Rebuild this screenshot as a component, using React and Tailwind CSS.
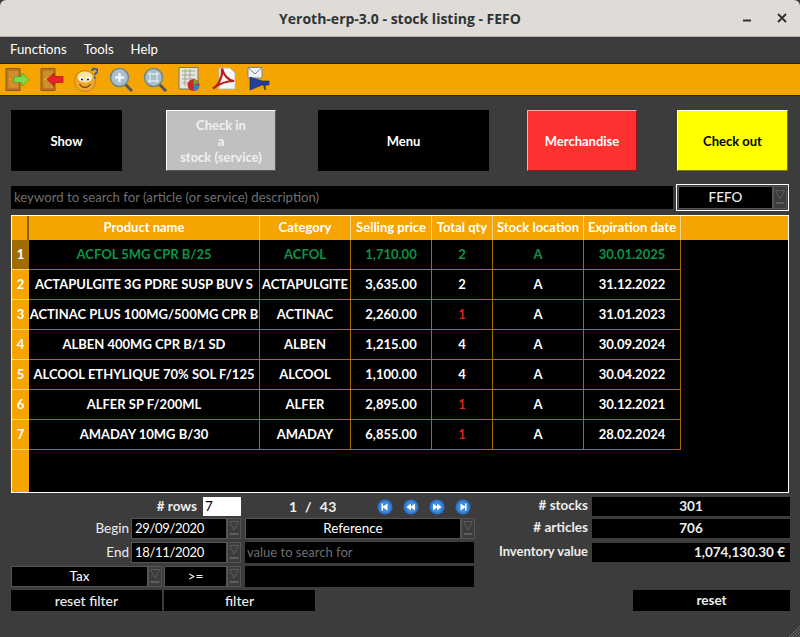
const headers = [
    ['Product name', 'w-[231px]'],
    ['Category', 'w-[91px]'],
    ['Selling price', 'w-[81px]'],
    ['Total qty', 'w-[61px]'],
    ['Stock location', 'w-[91px]'],
    ['Expiration date', 'w-[97px]'],
]

const rows = [
    ['ACFOL 5MG CPR B/25', 'ACFOL', '1,710.00', '2', 'A', '30.01.2025'],
    ['ACTAPULGITE 3G PDRE SUSP BUV S', 'ACTAPULGITE', '3,635.00', '2', 'A', '31.12.2022'],
    ['ACTINAC PLUS 100MG/500MG CPR B', 'ACTINAC', '2,260.00', '1', 'A', '31.01.2023'],
    ['ALBEN 400MG CPR B/1 SD', 'ALBEN', '1,215.00', '4', 'A', '30.09.2024'],
    ['ALCOOL ETHYLIQUE 70% SOL F/125', 'ALCOOL', '1,100.00', '4', 'A', '30.04.2022'],
    ['ALFER SP F/200ML', 'ALFER', '2,895.00', '1', 'A', '30.12.2021'],
    ['AMADAY 10MG B/30', 'AMADAY', '6,855.00', '1', 'A', '28.02.2024'],
]

function Arrow({ className = '' }) {
    return (
        <div className={`flex w-[14px] shrink-0 flex-col items-center justify-center border border-[#555] bg-[#3c3c3c] ${className}`}>
            <svg width="10" height="15" viewBox="0 0 10 15">
                <path d="M0.5 0.5H9.5L5 9Z" fill="none" stroke="#5c5c5c" />
                <path d="M0.5 13H9.5" stroke="#6a6a6a" strokeWidth="1.5" />
            </svg>
        </div>
    )
}

function Combo({ text, className = '', left }) {
    return (
        <div className={`flex h-[21px] ${className}`}>
            <div className={`flex min-w-0 flex-1 items-center border border-[#555] bg-black text-white ${left ? 'pl-[3px] text-[13px] tracking-[-0.3px]' : 'justify-center text-[13.5px]'}`}>{text}</div>
            <Arrow />
        </div>
    )
}

function NavIcon({ d }) {
    return (
        <svg width="16" height="16" viewBox="0 0 16 16">
            <circle cx="8" cy="8" r="7.5" fill="#2a76cf" />
            <circle cx="8" cy="8" r="5.5" fill="#3f8de0" />
            <path d={d} fill="#fff" />
        </svg>
    )
}

function Door({ color, edge, flip }) {
    return (
        <svg width="24" height="24" viewBox="0 0 24 24">
            <path d="M1 0.500H15V22.500H1Z" fill="#b9791c" stroke="#8a5a14" />
            <path d="M3.500 3H13V20H3.500Z" fill="#d08e2c" />
            <circle cx="5" cy="11" r="0.8" fill="#f0c070" />
            {flip
                ? <path d="M23 8.500H14V5L7 11.500L14 18V14.500H23Z" fill={color} stroke={edge} strokeWidth="0.7" />
                : <path d="M9 8.500H17V5L24 11.500L17 18V14.500H9Z" fill={color} stroke={edge} strokeWidth="0.7" />}
        </svg>
    )
}

function Toolbar() {
    return (
        <div className="flex h-[33px] items-center gap-[10.5px] border-y border-[#222] bg-[#f5a400] pl-[5px]">
            <Door color="#7fd94d" edge="#4d9c24" />
            <Door color="#ee2222" edge="#a01414" flip />
            <svg width="24" height="25" viewBox="0 0 24 25">
                <circle cx="11" cy="14" r="10.500" fill="#eda82d" stroke="#a96f12" strokeWidth="0.6" />
                <ellipse cx="11" cy="10" rx="7.500" ry="5.500" fill="#fbe3a5" />
                <circle cx="7.500" cy="12" r="2.200" fill="#fff" />
                <circle cx="14.500" cy="12" r="2.200" fill="#fff" />
                <circle cx="8" cy="12.500" r="1.100" fill="#222" />
                <circle cx="14" cy="12.500" r="1.100" fill="#222" />
                <path d="M5.500 17C8 21.500 14 21.500 16.500 17" fill="none" stroke="#8a3a10" strokeWidth="1.2" />
                <path d="M18 4C18 0.800 23.500 0.800 23.500 4C23.500 6 20.800 6 20.800 8M20.800 9.500V11.500" fill="none" stroke="#2f55a8" strokeWidth="1.6" />
            </svg>
            <svg width="24" height="25" viewBox="0 0 24 25">
                <path d="M15 16L23 24" stroke="#555" strokeWidth="3" />
                <circle cx="10.500" cy="10.500" r="9" fill="#a9c0cc" stroke="#74858e" strokeWidth="1.5" />
                <path d="M10.500 6V15M6 10.500H15" stroke="#f2f6f8" strokeWidth="2.4" />
            </svg>
            <svg width="24" height="25" viewBox="0 0 24 25">
                <path d="M15 16L23 24" stroke="#555" strokeWidth="3" />
                <circle cx="10.500" cy="10.500" r="9" fill="#a9c0cc" stroke="#74858e" strokeWidth="1.5" />
                <path d="M5 7H16M5 14H16M7 5V16M14 5V16" stroke="#dbe6ea" strokeWidth="1.3" />
            </svg>
            <svg width="24" height="25" viewBox="0 0 24 25">
                <path d="M1 0.500H20V22H1Z" fill="#e4e4de" stroke="#777" />
                <path d="M4 4H17M4 8H17M4 12H17M4 16H10M7 2V19M12 2V12" stroke="#a5a59e" />
                <circle cx="15.500" cy="18" r="6" fill="#c9272c" />
                <path d="M15.500 18H21.500A6 6 0 0 1 15.500 24Z" fill="#3a7fbe" />
                <path d="M15.500 18V12.500A6 6 0 0 1 21 16Z" fill="#6aa63a" />
            </svg>
            <svg width="24" height="25" viewBox="0 0 24 25">
                <path d="M7 1H18L23 6V22H7Z" fill="#fafafa" stroke="#bbb" />
                <path d="M1 21.500C6 19 11 10 10 1.500C12 9 16 13 22 14C15 14 8 16 1 21.500Z" fill="none" stroke="#bf1b1b" strokeWidth="2.200" />
            </svg>
            <svg width="24" height="25" viewBox="0 0 24 25">
                <path d="M1 0.500H15V11H1Z" fill="#eef1f5" stroke="#7b8794" />
                <path d="M1 0.500L8 7L15 0.500" fill="none" stroke="#7b8794" />
                <path d="M3 10L15 14H22V18H15L3 23Z" fill="#24409c" stroke="#15235c" strokeWidth="0.6" />
                <path d="M16 18L17.500 23H19L18.500 18Z" fill="#444" />
            </svg>
        </div>
    )
}

function ActionButton({ className, children }) {
    return (
        <div className={`flex h-[61px] items-center justify-center text-center text-[13px] font-bold leading-[16px] ${className}`}>
            {children}
        </div>
    )
}

function StockTable() {
    return (
        <div className="ml-[11px] mr-[11px] mt-[4px] flex h-[278px] flex-col border border-white bg-black">
            <div className="flex h-[24px] shrink-0 bg-[#f5a400] text-[13px] font-bold text-white">
                <div className="w-[17px] shrink-0 border-r-2 border-[#8a6000]" />
                {headers.map(([label, w]) => (
                    <div key={label} className={`flex ${w} shrink-0 items-center justify-center whitespace-nowrap border-r border-[#fbd88a]`}>{label}</div>
                ))}
            </div>
            <div className="flex min-h-0 flex-1">
                <div className="flex w-[17px] shrink-0 flex-col bg-[#f5a400] text-[13px] font-bold text-white">
                    {rows.map((r, i) => (
                        <div key={r[0]} className={`flex h-[30px] items-center justify-center border-b border-[#fbd88a] ${i === 0 ? 'bg-[#a06c00]' : ''}`}>{i + 1}</div>
                    ))}
                </div>
                <div className="flex flex-col">
                    {rows.map((r, i) => (
                        <div key={r[0]} className={`flex h-[30px] text-[13px] font-bold ${i === 0 ? 'text-[#0b9444]' : 'text-white'}`}>
                            {r.map((cell, j) => (
                                <div key={j} className={`flex ${headers[j][1]} shrink-0 items-center justify-center whitespace-nowrap border-b border-r border-[#a86f00] ${j === 3 && cell === '1' ? 'text-[#d8261c]' : ''}`}>{cell}</div>
                            ))}
                        </div>
                    ))}
                </div>
            </div>
        </div>
    )
}

function BottomPanel() {
    const label = 'text-[13.5px] text-[#eee] text-right'
    return (
        <div className="ml-[11px] mr-[10px] mt-[4px] flex justify-between">
            <div className="w-[464px]">
                <div className="flex h-[19px] items-center">
                    <span className="w-[192px] pr-[6px] text-right text-[13.5px] font-bold text-[#eee]"># rows</span>
                    <div className="flex h-[19px] w-[38px] items-center bg-white pl-[2px] text-[13.5px] text-black">7</div>
                    <span className="ml-[48px] w-[50px] whitespace-pre text-[14px] font-bold tracking-[0.4px] text-[#eee]">1  /  43</span>
                    <div className="ml-[38px] flex gap-[10px]">
                        <NavIcon d="M4.500 4.500H6V7.500L10.500 4.500V11.500L6 8.500V11.500H4.500Z" />
                        <NavIcon d="M8 4.500V7.500L12 4.500V11.500L8 8.500V11.500L3.500 8Z" />
                        <NavIcon d="M8 4.500V7.500L4 4.500V11.500L8 8.500V11.500L12.500 8Z" />
                        <NavIcon d="M11.500 4.500H10V7.500L5.500 4.500V11.500L10 8.500V11.500H11.500Z" />
                    </div>
                </div>
                <div className="mt-[2px] flex h-[21px]">
                    <span className={`w-[120px] pr-[2px] leading-[21px] ${label}`}>Begin</span>
                    <Combo text="29/09/2020" left className="w-[110px]" />
                    <Combo text="Reference" className="ml-[4px] w-[230px]" />
                </div>
                <div className="mt-[3px] flex h-[21px]">
                    <span className={`w-[120px] pr-[2px] leading-[21px] ${label}`}>End</span>
                    <Combo text="18/11/2020" left className="w-[110px]" />
                    <div className="ml-[4px] flex w-[229px] items-center bg-black pl-[2px] text-[13px] text-[#6f6f6f]">value to search for</div>
                </div>
                <div className="mt-[3px] flex h-[21px]">
                    <Combo text="Tax" className="w-[151px]" />
                    <Combo text=">=" className="ml-[2px] w-[77px]" />
                    <div className="ml-[4px] w-[229px] bg-black" />
                </div>
                <div className="mt-[3px] flex h-[21px] gap-[2px] text-[14px] font-medium text-[#eee]">
                    <div className="flex w-[151px] items-center justify-center bg-black">reset filter</div>
                    <div className="flex w-[151px] items-center justify-center bg-black">filter</div>
                </div>
            </div>
            <div className="w-[292px] text-[13.5px] font-bold text-[#eee]">
                <div className="flex h-[19px]">
                    <span className="w-[94px] pr-[4px] text-right leading-[17px]"># stocks</span>
                    <div className="flex w-[198px] items-center justify-center bg-black">301</div>
                </div>
                <div className="mt-[3px] flex h-[19px]">
                    <span className="w-[94px] pr-[4px] text-right leading-[17px]"># articles</span>
                    <div className="flex w-[198px] items-center justify-center bg-black">706</div>
                </div>
                <div className="mt-[5px] flex h-[19px]">
                    <span className="w-[94px] whitespace-nowrap pr-[4px] text-right text-[13px] leading-[17px]">Inventory value</span>
                    <div className="flex w-[198px] items-center justify-end bg-black pr-[5px]">1,074,130.30 €</div>
                </div>
                <div className="ml-[135px] mt-[28px] flex h-[21px] w-[157px] items-center justify-center bg-black">reset</div>
            </div>
        </div>
    )
}

export default function App() {
    return (
        <div className="relative h-[637px] w-[800px] overflow-hidden bg-[#3c3c3c] font-['Lato','Noto_Sans',sans-serif]">
            {/* title bar */}
            <div className="relative flex h-[37px] items-center justify-center rounded-t-[6px] border-b border-[#b8b2aa] bg-[#dfdcd8] font-['Open_Sans',sans-serif] text-[14px] font-bold text-[#2e3436]">
                Yeroth-erp-3.0 - stock listing - FEFO
                <svg className="absolute left-[743px] top-[19px]" width="10" height="4" viewBox="0 0 10 4"><path d="M0 1.500H8" stroke="#2e3436" strokeWidth="2" /></svg>
                <svg className="absolute left-[777px] top-[13px]" width="10" height="10" viewBox="0 0 10 10"><path d="M1 1L9 9M9 1L1 9" stroke="#2e3436" strokeWidth="2" /></svg>
            </div>
            <div className="flex h-[26px] items-center gap-[17px] bg-[#3c3c3c] pl-[10px] text-[13.2px] text-white">
                <span>Functions</span>
                <span>Tools</span>
                <span>Help</span>
            </div>
            <Toolbar />
            <div className="ml-[11px] mt-[14px] flex">
                <ActionButton className="w-[111px] bg-black text-white">Show</ActionButton>
                <ActionButton className="ml-[44px] w-[110px] border border-b-[#555] border-l-white border-r-[#555] border-t-white bg-[#c0c0c0] text-[#f0f0f0]">Check in<br />a<br />stock (service)</ActionButton>
                <ActionButton className="ml-[42px] w-[171px] bg-black text-white">Menu</ActionButton>
                <ActionButton className="ml-[38px] w-[110px] border border-b-[#8a1a1a] border-l-[#ffa8a8] border-r-[#8a1a1a] border-t-[#ffa8a8] bg-[#ff3030] text-white">Merchandise</ActionButton>
                <ActionButton className="ml-[40px] w-[111px] border border-b-[#77770a] border-l-white border-r-[#77770a] border-t-white bg-[#ffff00] text-black">Check out</ActionButton>
            </div>
            <div className="ml-[11px] mr-[11px] mt-[13px] flex h-[27px] gap-[3px]">
                <div className="flex h-[23px] w-[662px] items-center self-center bg-black pl-[3px] pt-[1px] text-[13.2px] text-[#6f6f6f]">keyword to search for (article (or service) description)</div>
                <div className="flex w-[113px] border border-white p-[1px]">
                    <div className="flex flex-1 items-center justify-center border border-[#555] bg-black text-[13.5px] font-medium text-[#eee]">FEFO</div>
                    <Arrow />
                </div>
            </div>
            <StockTable />
            <BottomPanel />
            {/* resize grip */}
            <svg className="absolute bottom-0 right-0" width="12" height="12" viewBox="0 0 12 12">
                <path d="M12 1L1 12M12 4L4 12M12 7L7 12M12 10L10 12" stroke="#6a6a6a" />
            </svg>
        </div>
    )
}
